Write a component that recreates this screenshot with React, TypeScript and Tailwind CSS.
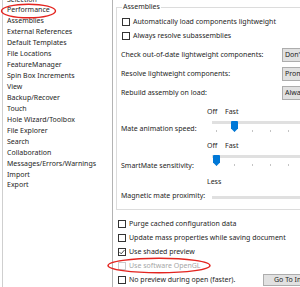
const pages = [
  "Selection",
  "Performance",
  "Assemblies",
  "External References",
  "Default Templates",
  "File Locations",
  "FeatureManager",
  "Spin Box Increments",
  "View",
  "Backup/Recover",
  "Touch",
  "Hole Wizard/Toolbox",
  "File Explorer",
  "Search",
  "Collaboration",
  "Messages/Errors/Warnings",
  "Import",
  "Export",
];

function Box({ checked, disabled }: { checked?: boolean; disabled?: boolean }) {
  return (
    <span
      className={`w-[8px] h-[8px] shrink-0 border bg-white flex items-center justify-center ${
        disabled ? "border-[#cccccc]" : "border-[#333333]"
      }`}
    >
      {checked && (
        <svg width="6" height="6" viewBox="0 0 6 6">
          <path d="M0.5 3.1 L2.2 4.8 L5.5 1" fill="none" stroke="#333" strokeWidth="0.9" />
        </svg>
      )}
    </span>
  );
}

function Check({ label, checked, disabled }: { label: string; checked?: boolean; disabled?: boolean }) {
  return (
    <div className="flex items-center h-[14px] gap-[3px]">
      <Box checked={checked} disabled={disabled} />
      <span className={disabled ? "text-[#a6a6a6]" : ""}>{label}</span>
    </div>
  );
}

function Combo({ label, value }: { label: string; value: string }) {
  return (
    <div className="flex items-center h-[14px] mt-[5px]">
      <span className="w-[161px] shrink-0">{label}</span>
      <div className="w-[80px] h-[14px] shrink-0 bg-[#e1e1e1] border border-[#adadad] flex items-center pl-[2px]">
        {value}
      </div>
    </div>
  );
}

// value = tick index the thumb sits on
function Slider({ value }: { value: number }) {
  return (
    <div className="relative w-[110px] h-[16px]">
      <div className="ml-[5px] mt-[4px] h-[3px] bg-[#e0e0e0]" />
      <div className="flex ml-[9px] mt-[6px] gap-[17px]">
        {[0, 1, 2, 3, 4, 5].map((i) => (
          <span key={i} className="w-px h-[2px] bg-[#c4c4c4]" />
        ))}
      </div>
      <svg className="absolute top-0" style={{ left: 6 + value * 18 }} width="7" height="11" viewBox="0 0 7 11">
        <path d="M0 1a1 1 0 0 1 1-1h5a1 1 0 0 1 1 1v6.5L3.5 11 0 7.5z" fill="#0078d7" />
      </svg>
    </div>
  );
}

export default function App() {
  return (
    <div className="relative w-[300px] h-[287px] overflow-hidden bg-white flex font-['Noto_Sans',sans-serif] text-[7px] text-[#1e1e1e]">
      {/* Options tree */}
      <div className="ml-[2px] w-[111px] h-full shrink-0 border-l border-r border-l-[#cfcfcf] border-r-[#b4b4b4]">
        <div className="-mt-[5.5px] pl-[4px]">
          {pages.map((p) => (
            <div key={p} className="h-[10.94px] leading-[10.94px] whitespace-nowrap">
              {p}
            </div>
          ))}
        </div>
      </div>

      {/* Performance page */}
      <div className="w-[260px] shrink-0 flex flex-col">
        <fieldset className="mt-[2px] ml-[3px] border border-[#dcdcdc] pl-[4px] pb-[8px]">
          <legend className="ml-[1px] px-[1px] leading-[10px]">Assemblies</legend>
          <div className="mt-[3px] ml-[1px]">
            <Check label="Automatically load components lightweight" />
            <Check label="Always resolve subassemblies" />
          </div>
          <Combo label="Check out-of-date lightweight components:" value="Don't check" />
          <Combo label="Resolve lightweight components:" value="Prompt" />
          <Combo label="Rebuild assembly on load:" value="Always" />

          <div className="flex mt-[7px]">
            <div className="w-[86px] shrink-0 pt-[17px] leading-[10px]">Mate animation speed:</div>
            <div>
              <div className="flex h-[10px] leading-[10px]">
                <span className="w-[18px]">Off</span>
                <span>Fast</span>
              </div>
              <div className="mt-[4px]">
                <Slider value={1} />
              </div>
            </div>
          </div>

          <div className="flex mt-[4px]">
            <div className="w-[86px] shrink-0 pt-[20px] leading-[10px]">SmartMate sensitivity:</div>
            <div>
              <div className="flex h-[10px] leading-[10px]">
                <span className="w-[18px]">Off</span>
                <span>Fast</span>
              </div>
              <div className="mt-[2px]">
                <Slider value={0} />
              </div>
            </div>
          </div>

          <div className="flex mt-[6px]">
            <div className="w-[86px] shrink-0 pt-[14px] leading-[10px] whitespace-nowrap">Magnetic mate proximity:</div>
            <div>
              <div className="h-[10px] leading-[10px]">Less</div>
              <div className="ml-[5px] mt-[9px] w-[110px] h-[3px] bg-[#e0e0e0]" />
            </div>
          </div>
        </fieldset>

        <div className="mt-[7px] pl-[5px]">
          <Check label="Purge cached configuration data" />
          <Check label="Update mass properties while saving document" />
          <Check label="Use shaded preview" checked />
          <Check label="Use software OpenGL" disabled />
          <div className="flex items-center h-[14px]">
            <Check label="No preview during open (faster)." />
            <button className="ml-auto w-[110px] h-[12px] bg-[#e1e1e1] border border-[#adadad] leading-[10px] text-left pl-[10px]">
              Go To Image Quality
            </button>
          </div>
        </div>
      </div>

      {/* red annotation rings */}
      <svg className="absolute inset-0 pointer-events-none" width="300" height="287">
        <ellipse cx="28.5" cy="11" rx="27" ry="6.8" fill="none" stroke="#e3241f" strokeWidth="1.4" />
        <ellipse cx="159" cy="265.5" rx="51" ry="7.3" fill="none" stroke="#e3241f" strokeWidth="1.4" />
      </svg>
    </div>
  );
}
